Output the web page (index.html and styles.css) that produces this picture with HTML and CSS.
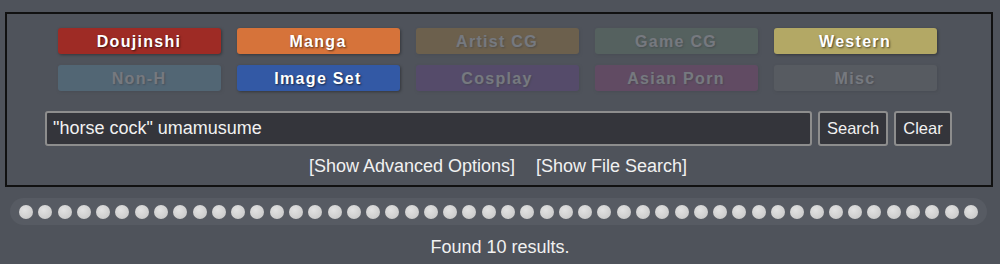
FILE: index.html
```html
<!DOCTYPE html>
<html lang="en">
<head>
    <meta charset="UTF-8">
    <title>Search</title>
    <link rel="stylesheet" href="styles.css">
</head>
<body>
    <div class="searchbox">
        <!-- categories -->
        <div class="cats">
            <div class="cat cat-doujinshi">Doujinshi</div>
            <div class="cat cat-manga">Manga</div>
            <div class="cat cat-artistcg off">Artist CG</div>
            <div class="cat cat-gamecg off">Game CG</div>
            <div class="cat cat-western">Western</div>
            <div class="cat cat-nonh off">Non-H</div>
            <div class="cat cat-imageset">Image Set</div>
            <div class="cat cat-cosplay off">Cosplay</div>
            <div class="cat cat-asian off">Asian Porn</div>
            <div class="cat cat-misc off">Misc</div>
        </div>

        <!-- search row -->
        <div class="search-row">
            <input type="text" class="search-input" value="&quot;horse cock&quot; umamusume">
            <button class="btn">Search</button>
            <button class="btn">Clear</button>
        </div>

        <div class="links">
            <a href="#">[Show Advanced Options]</a>
            <a href="#">[Show File Search]</a>
        </div>
    </div>

    <div class="dots">
        <span></span><span></span><span></span><span></span><span></span>
        <span></span><span></span><span></span><span></span><span></span>
        <span></span><span></span><span></span><span></span><span></span>
        <span></span><span></span><span></span><span></span><span></span>
        <span></span><span></span><span></span><span></span><span></span>
        <span></span><span></span><span></span><span></span><span></span>
        <span></span><span></span><span></span><span></span><span></span>
        <span></span><span></span><span></span><span></span><span></span>
        <span></span><span></span><span></span><span></span><span></span>
        <span></span><span></span><span></span><span></span><span></span>
    </div>

    <p class="found">Found 10 results.</p>
</body>
</html>
```

FILE: styles.css
```css
body {
    margin: 0;
    background-color: #4f535b;
    color: #f1f1f1;
    font-family: Arial, "Liberation Sans", sans-serif;
}
.searchbox {
    margin: 12px 7px 0 5px;
    border: 2px solid #111;
    padding: 14px 0 8px;
}
.cats {
    display: grid;
    grid-template-columns: repeat(5, 163px);
    column-gap: 16px;
    row-gap: 11px;
    justify-content: center;
    margin-left: -4px;
}
.cat {
    height: 26px;
    line-height: 28px;
    border-radius: 3px;
    text-align: center;
    font-size: 16px;
    font-weight: bold;
    letter-spacing: 1.3px;
    color: #fff;
    text-shadow: 1px 1px 2px rgba(0, 0, 0, 0.6);
    box-shadow: 1px 1px 3px rgba(0, 0, 0, 0.35);
}
.cat.off {
    opacity: 0.22;
}
.cat-doujinshi { background-color: #9e2b25; }
.cat-manga { background-color: #d6733a; }
.cat-artistcg { background-color: #d38f1d; }
.cat-gamecg { background-color: #6a936d; }
.cat-western { background-color: #b3a865; }
.cat-nonh { background-color: #5fa9cf; }
.cat-imageset { background-color: #3359a5; }
.cat-cosplay { background-color: #6a32a2; }
.cat-asian { background-color: #a23282; }
.cat-misc { background-color: #777; }

.search-row {
    display: flex;
    gap: 6px;
    margin: 20px 0 0 38px;
}
.search-input {
    width: 767px;
    height: 35px;
    box-sizing: border-box;
    background-color: #34353b;
    border: 2px solid #8d8d8d;
    border-radius: 3px;
    color: #f1f1f1;
    font-family: Arial, "Liberation Sans", sans-serif;
    font-size: 18px;
    padding: 0 6px;
}
.btn {
    height: 35px;
    box-sizing: border-box;
    background-color: #34353b;
    border: 2px solid #8d8d8d;
    border-radius: 3px;
    color: #f1f1f1;
    font-family: Arial, "Liberation Sans", sans-serif;
    font-size: 16.5px;
    padding: 0 7px;
}
.links {
    text-align: center;
    margin-top: 10px;
    font-size: 18px;
    line-height: 21px;
    margin-left: -2px;
}
.links a {
    color: #f1f1f1;
    text-decoration: none;
    margin: 0 8px;
}
.dots {
    margin: 11px 13px 0 10px;
    height: 27px;
    border-radius: 14px;
    background-color: #575b63;
    display: flex;
    align-items: center;
    justify-content: space-between;
    padding: 0 9px;
}
.dots span {
    width: 14px;
    height: 14px;
    border-radius: 50%;
    background: radial-gradient(circle at 40% 35%, #e2e2e2, #c4c4c4);
}
.found {
    text-align: center;
    font-size: 18px;
    line-height: 21px;
    margin: 12px 0 0;
}
```
